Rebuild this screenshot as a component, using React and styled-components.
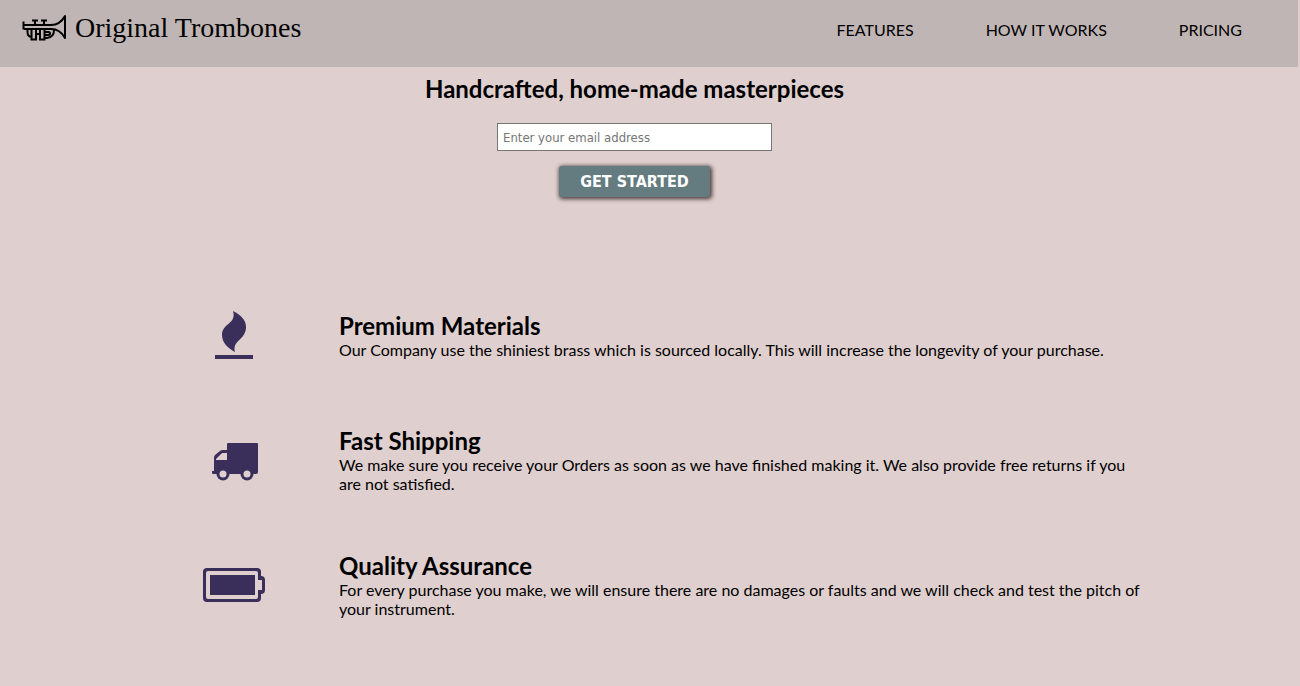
import React from "react";
import styled, { createGlobalStyle } from "styled-components";

const GlobalStyle = createGlobalStyle`
  * { box-sizing: border-box; margin: 0; padding: 0; }
  body {
    min-height: 100vh;
    background: #dfcfcf;
    color: #000;
    font-family: Lato, sans-serif;
    font-size: 16px;
    line-height: 19px;
  }
`;

const Header = styled.header`
  display: flex;
  justify-content: space-between;
  align-items: flex-start;
  min-height: 67px;
  margin-right: 2px;
  padding: 11px 56px 0 22px;
  background: #bfb5b4;
`;

const Brand = styled.a`
  display: flex;
  align-items: center;
  gap: 8px;
  color: #000;
  text-decoration: none;
  font-family: "Liberation Serif", serif;
  font-size: 28px;
  line-height: 34px;
`;

const Nav = styled.nav`
  display: flex;
  gap: 72px;
  padding-top: 9px;
`;

const NavLink = styled.a`
  color: #000;
  text-decoration: none;
`;

const Hero = styled.form`
  display: flex;
  flex-direction: column;
  align-items: center;
  padding: 7px 31px 0 0;
`;

const Title = styled.h2`
  font-size: 24px;
  line-height: 29px;
  font-weight: 700;
`;

const EmailInput = styled.input`
  width: 275px;
  height: 28px;
  margin: 20px 0 15px;
  padding: 0 5px;
  border: 1px solid #767676;
  background: #fff;
  font-family: "DejaVu Sans Condensed", "DejaVu Sans", sans-serif;
  font-stretch: condensed;
  font-size: 13px;
  &::placeholder { color: #757575; }
`;

const SubmitButton = styled.button`
  height: 31px;
  padding: 0 21px;
  border: 0;
  border-radius: 3px;
  background: #647b80;
  color: #fff;
  box-shadow: 1px 1px 4px 1px #4a3838;
  font-family: "DejaVu Sans Condensed", "DejaVu Sans", sans-serif;
  font-size: 16px;
  font-weight: 700;
`;

const Features = styled.main`
  width: 78%;
  margin: 75px 0 0 10%;
`;

const Feature = styled.section`
  display: flex;
  align-items: center;
  min-height: 125px;
`;

const IconCell = styled.div`
  display: flex;
  justify-content: center;
  flex: 0 0 209px;
  padding-right: 2px;
`;

const FeatureText = styled.div`
  flex: 1;
`;

const TrumpetIcon = () => (
  <svg width="45" height="28" viewBox="0 0 45 28" fill="none" stroke="#000" strokeWidth="2" aria-hidden="true">
    <path d="M1.5 7.5v8M2 11h27q9 0 14-9v22q-5-9-14-9H2" strokeLinejoin="round" />
    <path d="M10 6.5h6M19 6.5h6M13 6v5M22 6v5" />
    <path d="M5.5 15v3q0 5 5 5M9.5 15v10.5h4.5V15M18 15v10.5h4.5V15M14 20h4M23 24h2q7-1 7-8" />
    <path d="M23 18h3.5q1.5 0 1.5 1.5t-1.5 1.5H23" />
  </svg>
);

const FlameIcon = () => (
  <svg width="38" height="48" viewBox="0 0 38 48" fill="#392f5a" aria-hidden="true">
    <path d="M18 0C26 4 31 9 31 16C31 29 17 29 20 41C13 37 7 32 7 24C7 12 22 13 18 0Z" />
    <path d="M0 44h38v4H0z" />
  </svg>
);

const TruckIcon = () => (
  <svg width="50" height="42" viewBox="-2 -2 50 42" fill="#392f5a" aria-hidden="true">
    <path
      fillRule="evenodd"
      d="M17 2h29q1 0 1 1v28q0 2-2 2H2q-1 0-1-1v-2h2V17q0-2 1-3l5-4q1-1 3-1h4V3q0-1 1-1ZM5 19h11v-7h-4q-1 0-2 1l-5 5Z"
    />
    <circle cx="12" cy="33" r="6.5" />
    <circle cx="36" cy="33" r="6.5" />
    <circle cx="12" cy="33" r="3.5" fill="#dfcfcf" />
    <circle cx="36" cy="33" r="3.5" fill="#dfcfcf" />
  </svg>
);

const BatteryIcon = () => (
  <svg width="62" height="34" viewBox="0 0 62 34" fill="#392f5a" aria-hidden="true">
    <path
      fillRule="evenodd"
      d="M4 0h50q4 0 4 4v4q4 0 4 4v10q0 4-4 4v4q0 4-4 4H4q-4 0-4-4V4q0-4 4-4ZM5 3q-2 0-2 2v24q0 2 2 2h48q2 0 2-2v-7h4V12h-4V5q0-2-2-2Z"
    />
    <path d="M7 7h45v20H7z" />
  </svg>
);

const features = [
  {
    Icon: FlameIcon,
    title: "Premium Materials",
    text: "Our Company use the shiniest brass which is sourced locally. This will increase the longevity of your purchase.",
  },
  {
    Icon: TruckIcon,
    title: "Fast Shipping",
    text: "We make sure you receive your Orders as soon as we have finished making it. We also provide free returns if you are not satisfied.",
  },
  {
    Icon: BatteryIcon,
    title: "Quality Assurance",
    text: "For every purchase you make, we will ensure there are no damages or faults and we will check and test the pitch of your instrument.",
  },
];

export default function App() {
  return (
    <>
      <GlobalStyle />
      <Header>
        <Brand href="#">
          <TrumpetIcon />
          Original Trombones
        </Brand>
        <Nav>
          <NavLink href="#features">FEATURES</NavLink>
          <NavLink href="#how">HOW IT WORKS</NavLink>
          <NavLink href="#pricing">PRICING</NavLink>
        </Nav>
      </Header>
      <Hero onSubmit={(event) => event.preventDefault()}>
        <Title>Handcrafted, home-made masterpieces</Title>
        <EmailInput type="email" placeholder="Enter your email address" aria-label="Email address" />
        <SubmitButton type="submit">GET STARTED</SubmitButton>
      </Hero>
      <Features id="features">
        {features.map(({ Icon, title, text }) => (
          <Feature key={title}>
            <IconCell>
              <Icon />
            </IconCell>
            <FeatureText>
              <Title>{title}</Title>
              <p>{text}</p>
            </FeatureText>
          </Feature>
        ))}
      </Features>
    </>
  );
}
